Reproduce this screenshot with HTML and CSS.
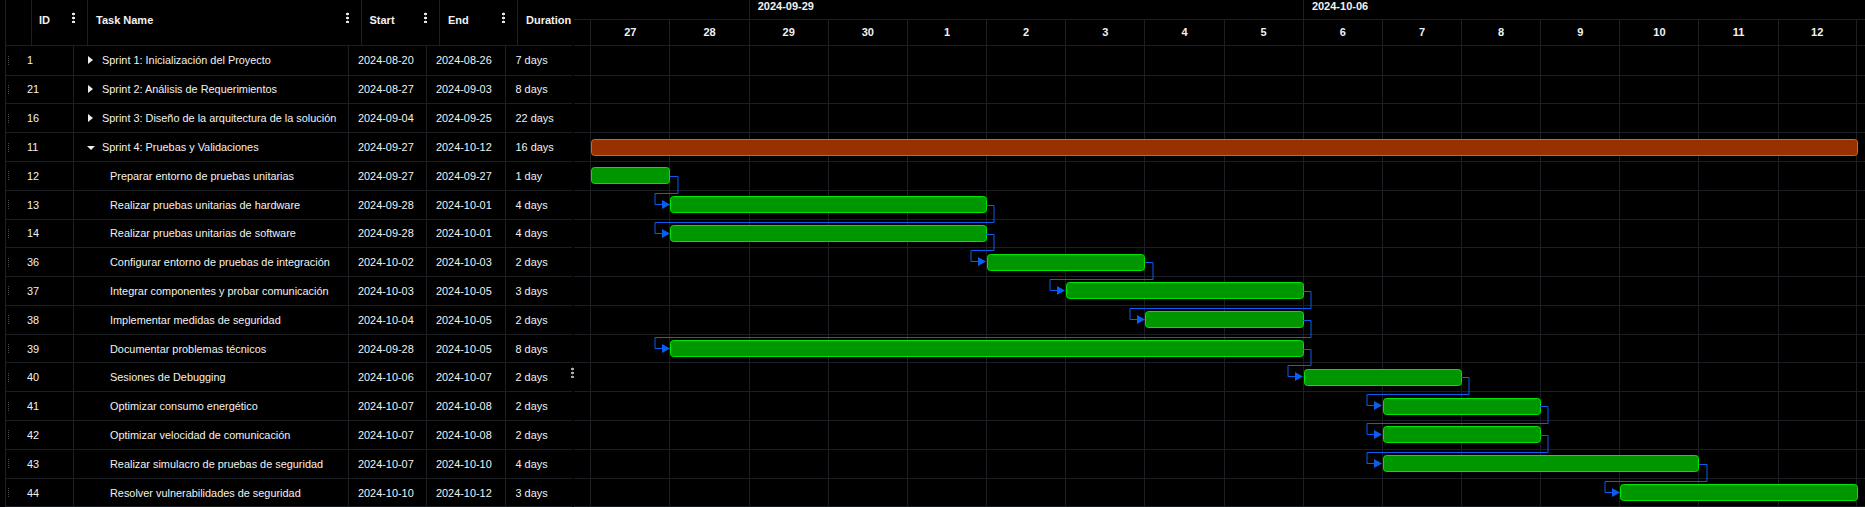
FILE: index.html
```html
<!DOCTYPE html>
<html>
<head>
  <meta charset="utf-8">
  <link rel="stylesheet" href="styles.css">
</head>
<body>

  <div class="gantt">

    <div class="grid-table">
      <div class="head">
        <div class="head-cell"></div>
        <div class="head-cell"><span>ID</span><i class="kebab"></i></div>
        <div class="head-cell"><span>Task Name</span><i class="kebab"></i></div>
        <div class="head-cell"><span>Start</span><i class="kebab"></i></div>
        <div class="head-cell"><span>End</span><i class="kebab"></i></div>
        <div class="head-cell"><span>Duration</span></div>
      </div>

      <div class="row"><div class="cell id"><i class="grip"></i>1</div><div class="cell task"><i class="caret"><b class="right"></b></i>Sprint 1: Inicialización del Proyecto</div><div class="cell">2024-08-20</div><div class="cell">2024-08-26</div><div class="cell">7 days</div></div>
      <div class="row"><div class="cell id"><i class="grip"></i>21</div><div class="cell task"><i class="caret"><b class="right"></b></i>Sprint 2: Análisis de Requerimientos</div><div class="cell">2024-08-27</div><div class="cell">2024-09-03</div><div class="cell">8 days</div></div>
      <div class="row"><div class="cell id"><i class="grip"></i>16</div><div class="cell task"><i class="caret"><b class="right"></b></i>Sprint 3: Diseño de la arquitectura de la solución</div><div class="cell">2024-09-04</div><div class="cell">2024-09-25</div><div class="cell">22 days</div></div>
      <div class="row"><div class="cell id"><i class="grip"></i>11</div><div class="cell task"><i class="caret"><b class="down"></b></i>Sprint 4: Pruebas y Validaciones</div><div class="cell">2024-09-27</div><div class="cell">2024-10-12</div><div class="cell">16 days</div></div>
      <div class="row"><div class="cell id"><i class="grip"></i>12</div><div class="cell child">Preparar entorno de pruebas unitarias</div><div class="cell">2024-09-27</div><div class="cell">2024-09-27</div><div class="cell">1 day</div></div>
      <div class="row"><div class="cell id"><i class="grip"></i>13</div><div class="cell child">Realizar pruebas unitarias de hardware</div><div class="cell">2024-09-28</div><div class="cell">2024-10-01</div><div class="cell">4 days</div></div>
      <div class="row"><div class="cell id"><i class="grip"></i>14</div><div class="cell child">Realizar pruebas unitarias de software</div><div class="cell">2024-09-28</div><div class="cell">2024-10-01</div><div class="cell">4 days</div></div>
      <div class="row"><div class="cell id"><i class="grip"></i>36</div><div class="cell child">Configurar entorno de pruebas de integración</div><div class="cell">2024-10-02</div><div class="cell">2024-10-03</div><div class="cell">2 days</div></div>
      <div class="row"><div class="cell id"><i class="grip"></i>37</div><div class="cell child">Integrar componentes y probar comunicación</div><div class="cell">2024-10-03</div><div class="cell">2024-10-05</div><div class="cell">3 days</div></div>
      <div class="row"><div class="cell id"><i class="grip"></i>38</div><div class="cell child">Implementar medidas de seguridad</div><div class="cell">2024-10-04</div><div class="cell">2024-10-05</div><div class="cell">2 days</div></div>
      <div class="row"><div class="cell id"><i class="grip"></i>39</div><div class="cell child">Documentar problemas técnicos</div><div class="cell">2024-09-28</div><div class="cell">2024-10-05</div><div class="cell">8 days</div></div>
      <div class="row"><div class="cell id"><i class="grip"></i>40</div><div class="cell child">Sesiones de Debugging</div><div class="cell">2024-10-06</div><div class="cell">2024-10-07</div><div class="cell">2 days</div></div>
      <div class="row"><div class="cell id"><i class="grip"></i>41</div><div class="cell child">Optimizar consumo energético</div><div class="cell">2024-10-07</div><div class="cell">2024-10-08</div><div class="cell">2 days</div></div>
      <div class="row"><div class="cell id"><i class="grip"></i>42</div><div class="cell child">Optimizar velocidad de comunicación</div><div class="cell">2024-10-07</div><div class="cell">2024-10-08</div><div class="cell">2 days</div></div>
      <div class="row"><div class="cell id"><i class="grip"></i>43</div><div class="cell child">Realizar simulacro de pruebas de seguridad</div><div class="cell">2024-10-07</div><div class="cell">2024-10-10</div><div class="cell">4 days</div></div>
      <div class="row"><div class="cell id"><i class="grip"></i>44</div><div class="cell child">Resolver vulnerabilidades de seguridad</div><div class="cell">2024-10-10</div><div class="cell">2024-10-12</div><div class="cell">3 days</div></div>

      <!-- handle of the splitter, sits over the table edge -->
      <i class="kebab split-handle"></i>
    </div>

    <div class="timeline">
      <div class="tl-weeks">
        <div class="week first"></div>
        <div class="week">2024-09-29</div>
        <div class="week">2024-10-06</div>
      </div>

      <div class="tl-days">
        <div class="day">27</div><div class="day">28</div><div class="day">29</div><div class="day">30</div>
        <div class="day">1</div><div class="day">2</div><div class="day">3</div><div class="day">4</div>
        <div class="day">5</div><div class="day">6</div><div class="day">7</div><div class="day">8</div>
        <div class="day">9</div><div class="day">10</div><div class="day">11</div><div class="day">12</div>
      </div>

      <div class="tl-body">
        <div class="tl-cols">
          <i></i><i></i><i></i><i></i><i></i><i></i><i></i><i></i>
          <i></i><i></i><i></i><i></i><i></i><i></i><i></i><i></i>
        </div>

        <div class="tl-row"></div>
        <div class="tl-row"></div>
        <div class="tl-row"></div>
        <div class="tl-row"><div class="bar summary" style="grid-column: 1 / span 16"></div></div>
        <div class="tl-row"><div class="bar" style="grid-column: 1 / span 1"></div></div>
        <div class="tl-row"><div class="bar" style="grid-column: 2 / span 4"></div></div>
        <div class="tl-row"><div class="bar" style="grid-column: 2 / span 4"></div></div>
        <div class="tl-row"><div class="bar" style="grid-column: 6 / span 2"></div></div>
        <div class="tl-row"><div class="bar" style="grid-column: 7 / span 3"></div></div>
        <div class="tl-row"><div class="bar" style="grid-column: 8 / span 2"></div></div>
        <div class="tl-row"><div class="bar" style="grid-column: 2 / span 8"></div></div>
        <div class="tl-row"><div class="bar" style="grid-column: 10 / span 2"></div></div>
        <div class="tl-row"><div class="bar" style="grid-column: 11 / span 2"></div></div>
        <div class="tl-row"><div class="bar" style="grid-column: 11 / span 2"></div></div>
        <div class="tl-row"><div class="bar" style="grid-column: 11 / span 4"></div></div>
        <div class="tl-row"><div class="bar" style="grid-column: 14 / span 3"></div></div>

        <!-- dependency links, in page coordinates -->
        <svg class="links" width="1291" height="461" viewBox="574 46 1291 461">
          <defs>
            <marker id="arrow" markerUnits="userSpaceOnUse" markerWidth="9" markerHeight="10" refX="0" refY="5" orient="auto" overflow="visible">
              <path d="M0 0.5V9.5L8 5z" fill="#0b5cf0"></path>
            </marker>
          </defs>
          <path marker-end="url(#arrow)" d="M670 176.5H678V193.5H655V204.5H662"></path>
          <path marker-end="url(#arrow)" d="M986 205.5H994V222.5H655V233.5H662"></path>
          <path marker-end="url(#arrow)" d="M986 234.5H994V250.5H971V261.5H978"></path>
          <path marker-end="url(#arrow)" d="M1145 262.5H1153V279.5H1050V290.5H1057"></path>
          <path marker-end="url(#arrow)" d="M1303 291.5H1311V308.5H1130V319.5H1137"></path>
          <path marker-end="url(#arrow)" d="M1303 320.5H1311V337.5H655V348.5H662"></path>
          <path marker-end="url(#arrow)" d="M1303 349.5H1311V365.5H1288V376.5H1295"></path>
          <path marker-end="url(#arrow)" d="M1461 377.5H1469V394.5H1367V405.5H1374"></path>
          <path marker-end="url(#arrow)" d="M1540 406.5H1548V423.5H1367V434.5H1374"></path>
          <path marker-end="url(#arrow)" d="M1540 435.5H1548V452.5H1367V463.5H1374"></path>
          <path marker-end="url(#arrow)" d="M1699 464.5H1707V481.5H1605V492.5H1612"></path>
        </svg>
      </div>
    </div>

  </div>

</body>
</html>
```

FILE: styles.css
```css
* {
  box-sizing: border-box;
}

html, body {
  margin: 0;
  background-color: #000;
}

body {
  font-family: 'Liberation Sans', Arial, sans-serif;
  font-size: 10.9px;
  color: #f2f2f2;
}

.gantt {
  display: flex;
  height: 507px;
  overflow: hidden;
  padding-left: 5px;
}

/* left table */
.grid-table {
  position: relative;
  width: 567px;
  border-left: 1px solid #1b1f23;
  flex-shrink: 0;
}

.head {
  display: grid;
  grid-template-columns: 26px 56px 273.5px 78.5px 78px 1fr;
  height: 46px;
  border-bottom: 1px solid #1b1f23;
}

.head-cell {
  display: flex;
  align-items: center;
  justify-content: space-between;
  padding: 0 12px 5px 8px;
  border-right: 1px solid #1b1f23;
  font-size: 11px;
  font-weight: bold;
  white-space: nowrap;
}

.head-cell:nth-child(2) {
  padding-left: 7px;
}

.head-cell:last-child {
  border-right: none;
  padding-right: 0;
}

.kebab {
  display: block;
  width: 3px;
  height: 11px;
  margin-bottom: 5px;
  background: radial-gradient(circle, #e4e4e4 1.3px, transparent 1.6px) 0 0 / 3px 4px;
}

.split-handle {
  position: absolute;
  top: 367px;
  right: -2px;
  background-image: radial-gradient(circle, #a8a8a8 1.3px, transparent 1.6px);
}

.row {
  display: grid;
  grid-template-columns: 68px 275px 78px 79px 1fr;
  height: 28.8px;
  border-bottom: 1px solid #1b1f23;
}

.row:nth-child(2) {
  height: 29.52px;
}

.cell {
  display: flex;
  align-items: center;
  padding-left: 9px;
  border-right: 1px solid #1b1f23;
  white-space: nowrap;
}

.cell:last-child {
  border-right: none;
  padding-left: 9.5px;
}

.cell.id {
  padding-left: 1px;
}

.cell.task {
  padding-left: 12.5px;
}

.cell.child {
  padding-left: 36px;
}

.grip {
  width: 3px;
  height: 9px;
  margin-right: 17px;
  background: conic-gradient(#4c4c4c 25%, transparent 0) 0 0 / 2px 2px;
}

.caret {
  display: flex;
  align-items: center;
  justify-content: center;
  width: 8px;
  height: 8px;
  margin-right: 7.5px;
}

.right {
  border-left: 5px solid #eee;
  border-top: 4px solid transparent;
  border-bottom: 4px solid transparent;
}

.down {
  border-top: 4px solid #eee;
  border-left: 4px solid transparent;
  border-right: 4px solid transparent;
  margin-top: 2px;
}

/* right side timeline */
.timeline {
  flex: 1;
  margin-left: 2px;
  min-width: 0;
  font-size: 11px;
  font-weight: bold;
}

.tl-weeks {
  display: flex;
  height: 20px;
  border-bottom: 1px solid #1b1f23;
}

.week {
  width: 554.2px;
  padding-left: 8px;
  line-height: 12px;
  border-left: 1px solid #1b1f23;
}

.week.first {
  width: 174.7px;
  border-left: none;
}

.tl-days {
  display: flex;
  height: 26px;
  padding-left: 16.3px;
  border-bottom: 1px solid #1b1f23;
}

.day {
  width: 79.17px;
  text-align: center;
  line-height: 25px;
  border-left: 1px solid #1b1f23;
}

.day:last-child {
  border-right: 1px solid #1b1f23;
}

.tl-body {
  position: relative;
}

.tl-cols {
  position: absolute;
  top: 0;
  left: 16.3px;
  bottom: 0;
  display: flex;
}

.tl-cols i {
  width: 79.17px;
  border-left: 1px solid #1b1f23;
}

.tl-cols i:last-child {
  border-right: 1px solid #1b1f23;
}

.tl-row {
  position: relative;
  display: grid;
  grid-template-columns: repeat(16, 79.17px);
  align-items: center;
  height: 28.8px;
  padding-left: 16.3px;
  border-bottom: 1px solid #1b1f23;
}

.tl-row:nth-child(2) {
  height: 29.52px;
}

.bar {
  height: 17px;
  margin: 0 -1px 0 1px;
  background-color: #009600;
  border: 1px solid #00e600;
  border-radius: 3.5px;
}

.bar.summary {
  background-color: #983000;
  border-color: #e8600f;
}

.links {
  position: absolute;
  top: 0;
  left: 0;
  overflow: visible;
}

.links > path {
  fill: none;
  stroke: #0b5cf0;
  stroke-width: 1;
}
```
